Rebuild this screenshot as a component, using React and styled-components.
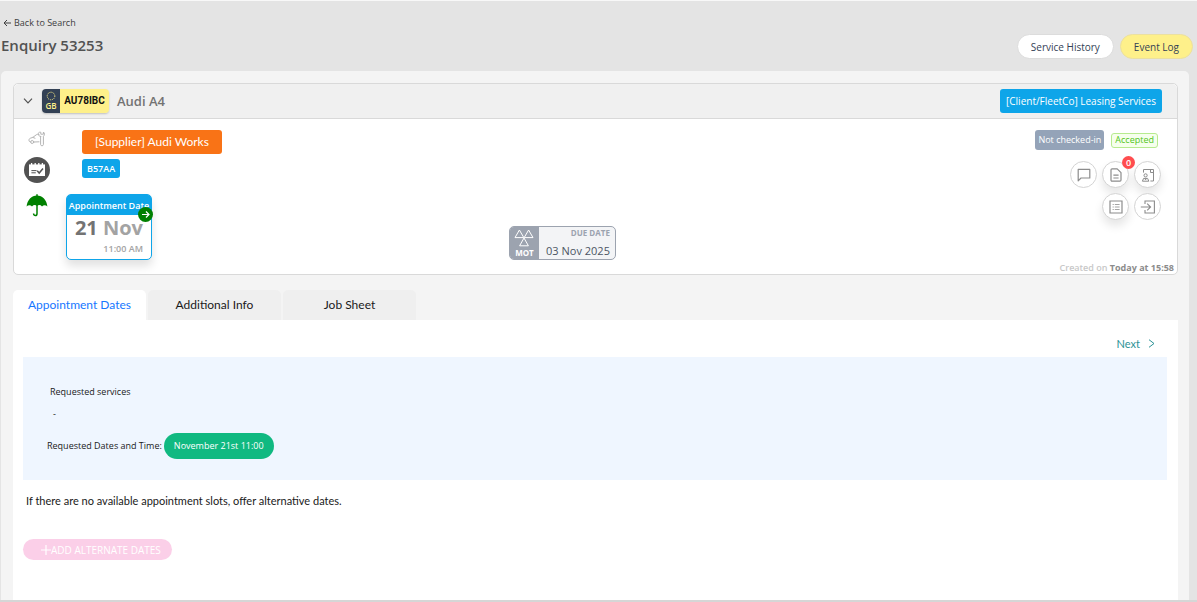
import React, { useState } from 'react';
import styled, { createGlobalStyle } from 'styled-components';

const GlobalStyle = createGlobalStyle`
    *, *::before, *::after {
        box-sizing: border-box;
    }
    body {
        margin: 0;
        background: #e4e4e4;
        font-family: "Open Sans", "Noto Sans", sans-serif;
        font-size: 11px;
        line-height: 16px;
        color: #1a1a1a;
    }
    button {
        font-family: inherit;
        cursor: pointer;
    }
    h1, h2, p {
        margin: 0;
    }
`;

const textFont = 'Lato, "Open Sans", sans-serif';

const tabs = ['Appointment Dates', 'Additional Info', 'Job Sheet'];

const ArrowLeftIcon = () => (
    <svg width="8" height="8" viewBox="0 0 8 8" fill="none" stroke="currentColor">
        <path d="M8 4H1M4 1L1 4L4 7" />
    </svg>
);

const ArrowRightIcon = () => (
    <svg width="9" height="9" viewBox="0 0 9 9" fill="none" stroke="currentColor" strokeWidth="1.2">
        <path d="M1 4.5H8M5 1.5L8 4.5L5 7.5" />
    </svg>
);

const ChevronDownIcon = () => (
    <svg width="10" height="6" viewBox="0 0 10 6" fill="none" stroke="currentColor" strokeWidth="1.2">
        <path d="M1 0.7L5 4.8L9 0.7" />
    </svg>
);

const ChevronRightIcon = () => (
    <svg width="7" height="9" viewBox="0 0 7 9" fill="none" stroke="currentColor">
        <path d="M1 0.7L6 4.5L1 8.3" />
    </svg>
);

const StarsIcon = () => (
    <svg width="10" height="10" viewBox="0 0 10 10" fill="none" stroke="#fef08a">
        <circle cx="5" cy="5" r="3.8" strokeWidth="1" strokeDasharray="1 0.99" />
    </svg>
);

const CarServiceIcon = () => (
    <svg width="18" height="16" viewBox="0 0 18 16" fill="none" stroke="#b5b5b5" strokeLinejoin="round" strokeLinecap="round">
        <path d="M11 10.8L6 11M2.6 11L1.2 10.2C0.6 9 1.2 7.6 2.4 7.2L4.8 6.4L8 4C9 3.2 10 3.2 11 3.4" />
        <path d="M4.8 6.4L7 7.2" />
        <circle cx="4.2" cy="11" r="1.5" />
        <path d="M12.6 5.4V13.6C12.8 15.2 15.2 15.2 15.4 13.6V5.2C16.8 4.2 16.8 2.2 15.4 1V3.2H12.8V1.2C11 0.8 9.8 2 10.4 4C11 5 11.8 5.2 12.6 5.4Z" />
    </svg>
);

const CalendarCheckIcon = () => (
    <svg width="26" height="26" viewBox="0 0 26 26">
        <circle cx="13" cy="13" r="13" fill="#525252" />
        <path d="M5 7.4H21V19H5Z" fill="#fff" />
        <path d="M7.6 6V8M11.2 6V8M14.8 6V8M18.4 6V8" stroke="#fff" strokeWidth="1.3" />
        <path d="M7.4 13.6H12.6M7.4 15.8H11.8" stroke="#525252" strokeWidth="1" />
        <path d="M13.2 13.8L15.2 16L19 11.6" fill="none" stroke="#525252" strokeWidth="1.5" />
    </svg>
);

const UmbrellaIcon = () => (
    <svg width="22" height="24" viewBox="0 0 22 24" fill="none">
        <path
            d="M11 2.4C16.4 2.6 20.8 6.8 21.4 13.4C19.8 11.8 17.4 11.8 16 13.4C14.6 11.8 12.6 11.6 11 13C9.4 11.6 7.4 11.8 6 13.4C4.6 11.8 2.2 11.8 0.6 13.4C1.2 6.8 5.6 2.6 11 2.4Z"
            fill="#008000"
        />
        <path d="M11 1.2V20.4C11 23.2 7.6 23.2 7.6 20.4" stroke="#008000" strokeWidth="1.5" />
    </svg>
);

const MotIcon = () => (
    <svg width="20" height="18" viewBox="0 0 20 18" fill="none" stroke="#fff" strokeLinejoin="round">
        <path d="M1 8.6L5.4 1L9.8 8.6ZM10.2 8.6L14.6 1L19 8.6ZM10 9L5.6 16.8H14.4Z" />
    </svg>
);

const MessageIcon = () => (
    <svg width="14" height="14" viewBox="0 0 14 14" fill="none" stroke="currentColor" strokeWidth="1.2" strokeLinejoin="round">
        <path d="M1.2 1.4H12.8V10H4L1.2 12.8Z" />
    </svg>
);

const DocumentIcon = () => (
    <svg width="14" height="14" viewBox="0 0 14 14" fill="none" stroke="currentColor" strokeWidth="1.2" strokeLinejoin="round">
        <path d="M3 0.8H8.2L12 4.6V12C12 12.7 11.6 13.2 11 13.2H3C2.4 13.2 2 12.7 2 12V1.8C2 1.2 2.4 0.8 3 0.8Z" />
        <path d="M4.4 7.2H9.6M4.4 10H9.6" />
    </svg>
);

const PersonFileIcon = () => (
    <svg width="14" height="14" viewBox="0 0 14 14" fill="none" stroke="currentColor">
        <path d="M2.5 4.6V1.5H12.5V13H9.4M9.5 1.5V4.5H12.5" />
        <circle cx="4.6" cy="7.4" r="1.6" />
        <path d="M1.4 13.2L2.6 10.4H6.6L7.8 13.2ZM3.8 10.6L4.6 11.8L5.4 10.6" />
    </svg>
);

const ListIcon = () => (
    <svg width="14" height="14" viewBox="0 0 14 14" fill="none" stroke="currentColor">
        <path d="M1 1H13V13H1Z" strokeWidth="1.2" />
        <path d="M3.6 4.5H4.8M3.6 7H4.8M3.6 9.5H4.8M5.8 4.5H10.6M5.8 7H10.6M5.8 9.5H10.6" strokeWidth="0.8" />
    </svg>
);

const EnterIcon = () => (
    <svg width="16" height="14" viewBox="0 0 16 14" fill="none" stroke="currentColor" strokeWidth="1.1">
        <path d="M5 4V1H14.4V13H5V10" />
        <path d="M0.8 7H10.4M7.2 3.6L10.6 7L7.2 10.4" />
    </svg>
);

const PlusIcon = () => (
    <svg width="10" height="10" viewBox="0 0 10 10" fill="none" stroke="currentColor" strokeWidth="1.2">
        <path d="M5 0V10M0 5H10" />
    </svg>
);

const actions = [
    { label: 'Messages', icon: <MessageIcon /> },
    { label: 'Documents', icon: <DocumentIcon />, count: 0, raised: true },
    { label: 'Driver details', icon: <PersonFileIcon />, raised: true },
    { label: 'Job list', icon: <ListIcon />, raised: true },
    { label: 'Check in', icon: <EnterIcon /> },
];

export default function App() {
    const [activeTab, setActiveTab] = useState(tabs[0]);

    return (
        <React.Fragment>
            <GlobalStyle />
            <Page>
                <Header>
                    <div>
                        <BackLink href="#search"><ArrowLeftIcon />Back to Search</BackLink>
                        <Title>Enquiry 53253</Title>
                    </div>
                    <HeaderButtons>
                        <PillButton type="button">Service History</PillButton>
                        <PillButton type="button" $highlight>Event Log</PillButton>
                    </HeaderButtons>
                </Header>

                <Main>
                    <Card>
                        <CardHeader>
                            <ToggleButton type="button" aria-label="Collapse"><ChevronDownIcon /></ToggleButton>
                            <Plate>
                                <PlateCountry><StarsIcon />GB</PlateCountry>
                                <PlateNumber>AU78IBC</PlateNumber>
                            </Plate>
                            <Vehicle>Audi A4</Vehicle>
                            <ClientTag>[Client/FleetCo] Leasing Services</ClientTag>
                        </CardHeader>

                        <CardBody>
                            <Rail>
                                <CarServiceIcon />
                                <CalendarCheckIcon />
                                <UmbrellaIcon />
                            </Rail>

                            <Info>
                                <SupplierTag>[Supplier] Audi Works</SupplierTag>
                                <PostcodeTag>B57AA</PostcodeTag>
                                <DateCard>
                                    <DateCardTitle>Appointment Date</DateCardTitle>
                                    <DateCardDay>21 <span>Nov</span></DateCardDay>
                                    <DateCardTime>11:00 AM</DateCardTime>
                                    <DateCardBadge><ArrowRightIcon /></DateCardBadge>
                                </DateCard>
                            </Info>

                            <Mot>
                                <MotLabel><MotIcon />MOT</MotLabel>
                                <MotDate>
                                    <MotCaption>DUE DATE</MotCaption>
                                    03 Nov 2025
                                </MotDate>
                            </Mot>

                            <Status>
                                <StatusTags>
                                    <CheckedTag>Not checked-in</CheckedTag>
                                    <AcceptedTag>Accepted</AcceptedTag>
                                </StatusTags>
                                <Actions>
                                    {actions.map(({ label, icon, count, raised }) => (
                                        <ActionButton key={label} type="button" aria-label={label} $raised={raised}>
                                            {icon}
                                            {count !== undefined && <Count>{count}</Count>}
                                        </ActionButton>
                                    ))}
                                </Actions>
                                <Created>Created on <b>Today at 15:58</b></Created>
                            </Status>
                        </CardBody>
                    </Card>

                    <TabList role="tablist">
                        {tabs.map((tab) => (
                            <Tab
                                key={tab}
                                type="button"
                                role="tab"
                                aria-selected={tab === activeTab}
                                $active={tab === activeTab}
                                onClick={() => setActiveTab(tab)}
                            >
                                {tab}
                            </Tab>
                        ))}
                    </TabList>

                    <TabPanel role="tabpanel">
                        <NextButton type="button">Next<ChevronRightIcon /></NextButton>
                        <RequestBox>
                            <Services>
                                <p>Requested services</p>
                                <p>-</p>
                            </Services>
                            <RequestedDates>
                                Requested Dates and Time:
                                <DatePill>November 21st 11:00</DatePill>
                            </RequestedDates>
                        </RequestBox>
                        <Hint>If there are no available appointment slots, offer alternative dates.</Hint>
                        <AddButton type="button"><PlusIcon />ADD ALTERNATE DATES</AddButton>
                    </TabPanel>
                </Main>
            </Page>
        </React.Fragment>
    );
}

const Page = styled.div`
    min-height: 100vh;
    display: flex;
    flex-direction: column;
    border-top: 1px solid #f8f8f8;
    border-bottom: 2px solid #d6d6d6;
`;

const Header = styled.header`
    display: flex;
    justify-content: space-between;
    align-items: flex-end;
    padding: 14px 4px 12px 1px;
`;

const BackLink = styled.a`
    display: flex;
    align-items: center;
    gap: 3px;
    padding-left: 2px;
    font-size: 9px;
    color: #404040;
    text-decoration: none;
`;

const Title = styled.h1`
    padding: 4px 0;
    font-size: 15px;
    line-height: 20px;
    font-weight: 600;
    color: #525252;
`;

const HeaderButtons = styled.div`
    display: flex;
    gap: 6px;
`;

const PillButton = styled.button`
    height: 25px;
    padding: 0 13px;
    border: 1px solid ${({ $highlight }) => ($highlight ? '#ebe0a0' : '#dcdcdc')};
    border-radius: 13px;
    background: ${({ $highlight }) => ($highlight ? '#fef08a' : '#fff')};
    color: #334155;
    font-size: 10px;
`;

const Main = styled.main`
    flex: 1;
    display: flex;
    flex-direction: column;
    margin: 0 8px 0 1px;
    padding: 12px 11px 0 12px;
    border-radius: 5px 5px 0 0;
    background: #f4f4f4;
`;

const Card = styled.section`
    border: 1px solid #d9d9d9;
    border-radius: 5px;
    background: #fff;
`;

const CardHeader = styled.div`
    display: flex;
    align-items: center;
    height: 35px;
    padding: 0 15px 0 9px;
    border-bottom: 1px solid #d9d9d9;
    border-radius: 5px 5px 0 0;
    background: #f0f0f0;
`;

const ToggleButton = styled.button`
    display: flex;
    width: 12px;
    margin-right: 7px;
    padding: 0;
    border: 0;
    background: none;
    color: #525252;
`;

const Plate = styled.div`
    display: flex;
    height: 24px;
    overflow: hidden;
    border-radius: 4px;
    box-shadow: 0 1px 2px rgba(0, 0, 0, 0.2);
`;

const PlateCountry = styled.div`
    display: flex;
    flex-direction: column;
    align-items: center;
    justify-content: center;
    width: 18px;
    background: #334155;
    color: #fef08a;
    font-size: 8px;
    line-height: 10px;
    font-weight: 600;
`;

const PlateNumber = styled.div`
    width: 49px;
    background: #fef08a;
    color: #111;
    font-family: Roboto, sans-serif;
    font-size: 10px;
    font-weight: 700;
    line-height: 24px;
    text-align: center;
`;

const Vehicle = styled.h2`
    margin-left: 8px;
    font-size: 13px;
    line-height: 18px;
    font-weight: 600;
    color: #737373;
`;

const Tag = styled.span`
    display: flex;
    align-items: center;
    justify-content: center;
    border-radius: 3px;
    color: #fff;
`;

const ClientTag = styled(Tag)`
    height: 24px;
    margin-left: auto;
    padding: 0 6px;
    background: #0ea5e9;
    font-size: 10px;
`;

const CardBody = styled.div`
    display: grid;
    grid-template-columns: 52px 15fr auto 19fr;
    min-height: 155px;
`;

const Rail = styled.div`
    display: flex;
    flex-direction: column;
    align-items: center;
    gap: 10px;
    padding: 12px 6px 0 0;
`;

const Info = styled.div`
    display: flex;
    flex-direction: column;
    align-items: flex-start;
    padding-top: 11px;
`;

const SupplierTag = styled(Tag)`
    height: 24px;
    margin-left: 16px;
    padding: 0 13px;
    background: #f97316;
    font-family: ${textFont};
    font-size: 12px;
`;

const PostcodeTag = styled(Tag)`
    height: 19px;
    margin: 5px 0 16px 16px;
    padding: 0 5px;
    background: #0ea5e9;
    font-size: 9px;
    font-weight: 600;
`;

const DateCard = styled.div`
    position: relative;
    width: 86px;
    height: 66px;
    border: 1px solid #0ea5e9;
    border-radius: 5px;
    background: #fff;
    text-align: right;
    box-shadow: 0 6px 10px rgba(0, 0, 0, 0.12);
`;

const DateCardTitle = styled.div`
    height: 20px;
    padding: 3px 0;
    border-radius: 3px 3px 0 0;
    background: #0ea5e9;
    color: #fff;
    font-size: 9px;
    font-weight: 600;
    text-align: center;
    white-space: nowrap;
`;

const DateCardDay = styled.div`
    padding-right: 8px;
    font-size: 20px;
    line-height: 26px;
    font-weight: 700;
    color: #737373;

    span {
        color: #a3a3a3;
    }
`;

const DateCardTime = styled.div`
    padding-right: 8px;
    font-size: 9px;
    font-weight: 600;
    color: #a3a3a3;
`;

const DateCardBadge = styled.span`
    position: absolute;
    top: 12px;
    right: -2px;
    display: flex;
    align-items: center;
    justify-content: center;
    width: 15px;
    height: 15px;
    border-radius: 50%;
    background: #008000;
    color: #fff;
`;

const Mot = styled.div`
    align-self: end;
    display: flex;
    width: 107px;
    height: 34px;
    margin-bottom: 14px;
    overflow: hidden;
    border: 1px solid #9ca3af;
    border-radius: 5px;
    background: #f3f4f6;
`;

const MotLabel = styled.div`
    display: flex;
    flex-direction: column;
    align-items: center;
    justify-content: flex-end;
    width: 29px;
    background: #9ca3af;
    color: #fff;
    font-size: 8px;
    line-height: 12px;
    font-weight: 700;
`;

const MotDate = styled.div`
    flex: 1;
    padding-right: 5px;
    color: #4b5563;
    font-size: 11px;
    line-height: 24px;
    text-align: right;
`;

const MotCaption = styled.div`
    color: #9ca3af;
    font-size: 8px;
    line-height: 12px;
    font-weight: 700;
`;

const Status = styled.div`
    display: flex;
    flex-direction: column;
    align-items: flex-end;
    padding: 11px 3px 0 0;
`;

const StatusTags = styled.div`
    display: flex;
    align-items: center;
    gap: 7px;
    padding-right: 16px;
`;

const CheckedTag = styled(Tag)`
    height: 20px;
    padding: 0 3px;
    background: #94a3b8;
    font-size: 9px;
`;

const AcceptedTag = styled(Tag)`
    height: 15px;
    padding: 0 3px;
    border: 1px solid #b7eb8f;
    background: #f6ffed;
    color: #52c41a;
    font-size: 9px;
`;

const Actions = styled.div`
    display: flex;
    flex-wrap: wrap;
    justify-content: flex-end;
    gap: 5px;
    width: 104px;
    padding: 11px 13px 0 0;
    box-sizing: content-box;
`;

const ActionButton = styled.button`
    position: relative;
    display: flex;
    align-items: center;
    justify-content: center;
    width: 27px;
    height: 27px;
    padding: 0;
    border: 1px solid #d4d4d4;
    border-radius: 50%;
    background: #fff;
    color: #8c8c8c;
    box-shadow: ${({ $raised }) => ($raised ? '0 6px 10px rgba(0, 0, 0, 0.1)' : 'none')};
`;

const Count = styled.span`
    position: absolute;
    top: -6px;
    right: -7px;
    width: 13px;
    height: 13px;
    border-radius: 50%;
    background: #ff4d4f;
    color: #fff;
    font-size: 9px;
    line-height: 13px;
    font-weight: 600;
`;

const Created = styled.p`
    margin-top: auto;
    color: #c8c8c8;
    font-size: 9px;
    line-height: 12px;
    font-weight: 600;

    b {
        color: #8c8c8c;
        font-weight: 700;
    }
`;

const TabList = styled.div`
    display: flex;
    gap: 2px;
    margin-top: 15px;
`;

const Tab = styled.button`
    width: 133px;
    height: 30px;
    padding: 0 0 2px;
    border: 0;
    border-radius: 5px 5px 0 0;
    background: ${({ $active }) => ($active ? '#fff' : '#efefef')};
    color: ${({ $active }) => ($active ? '#1677ff' : '#1a1a1a')};
    font-family: ${textFont};
    font-size: 12px;
`;

const TabPanel = styled.div`
    flex: 1;
    display: flex;
    flex-direction: column;
    align-items: flex-start;
    padding: 0 11px 20px 10px;
    background: #fff;
`;

const NextButton = styled.button`
    display: flex;
    align-items: center;
    align-self: flex-end;
    gap: 8px;
    height: 37px;
    padding: 10px 12px 0 0;
    border: 0;
    background: none;
    color: #2c9296;
    font-family: ${textFont};
    font-size: 11px;
`;

const RequestBox = styled.div`
    align-self: stretch;
    padding: 24px 24px 21px;
    background: #eff6ff;
    font-size: 9px;
    line-height: 22px;
`;

const Services = styled.div`
    padding: 0 3px 8px;

    p + p {
        padding-left: 3px;
    }
`;

const RequestedDates = styled.div`
    display: flex;
    align-items: center;
    gap: 2px;
`;

const DatePill = styled.span`
    padding: 2px 10px;
    border-radius: 13px;
    background: #10b981;
    color: #fff;
    font-weight: 500;
`;

const Hint = styled.p`
    padding: 13px 3px 30px;
    font-family: ${textFont};
    font-size: 11px;
`;

const AddButton = styled.button`
    display: flex;
    align-items: center;
    height: 21px;
    padding: 0 11px 0 18px;
    border: 0;
    border-radius: 11px;
    background: #fbcfe8;
    color: #fff;
    font-size: 10px;
`;
